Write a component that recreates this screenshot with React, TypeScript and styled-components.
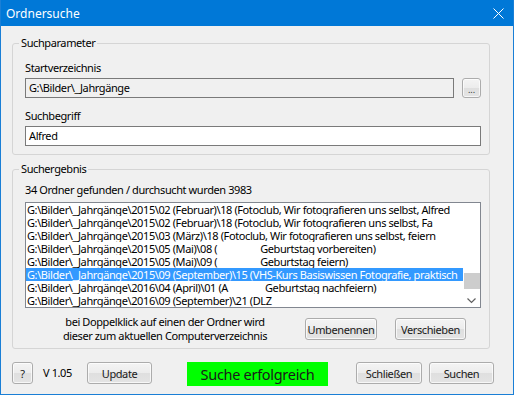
import React from "react";
import styled, { createGlobalStyle } from "styled-components";

const GlobalStyle = createGlobalStyle`
  html, body { margin: 0; padding: 0; background: #ffffff; }
  body { font-family: "Noto Sans", "DejaVu Sans", sans-serif; color: #000; }
  * { box-sizing: border-box; }
`;

const Window = styled.div`
  width: 514px;
  height: 395px;
  border: 1px solid #1a7fd6;
  border-top: none;
  background: #f0f0f0;
  display: flex;
  flex-direction: column;
  font-size: 11px;
  letter-spacing: -0.4px;
`;

const TitleBar = styled.div`
  height: 26px;
  flex: none;
  background: #0078d7;
  color: #ffffff;
  display: flex;
  align-items: center;
  justify-content: space-between;
  padding-left: 5px;
  font-size: 12px;
  letter-spacing: 0;
`;

const CloseBtn = styled.div`
  width: 30px;
  height: 26px;
  display: flex;
  align-items: center;
  justify-content: center;
`;

const Body = styled.div`
  padding: 9px 23px 0 11px;
  display: flex;
  flex-direction: column;
`;

const Group = styled.fieldset<{ $mt?: number }>`
  margin: ${(p) => p.$mt ?? 0}px 0 0 0;
  border: 1px solid #d5d5d5;
  border-radius: 3px;
  padding: ${(p) => (p.$mt ? 5 : 9)}px 8px ${(p) => (p.$mt ? 5 : 8)}px 12px;
  min-width: 0;
  width: 478px;
`;

const Legend = styled.legend`
  line-height: 16px;
  padding: 0 2px;
  margin-left: -6px;
`;

const Label = styled.div`
  line-height: 16px;
`;

const FieldRow = styled.div<{ $mb?: number }>`
  display: flex;
  align-items: center;
  gap: 8px;
  margin-top: 2px;
  margin-bottom: ${(p) => p.$mb ?? 0}px;
`;

const TextBox = styled.div<{ $bg: string }>`
  flex: 1;
  height: 20px;
  border: 1px solid #7a7a7a;
  background: ${(p) => p.$bg};
  padding-left: 3px;
  line-height: 18px;
  white-space: nowrap;
`;

const Button = styled.div<{ $w: number; $h?: number }>`
  width: ${(p) => p.$w}px;
  height: ${(p) => p.$h ?? 22}px;
  flex: none;
  border: 1px solid #acacac;
  border-radius: 3px;
  background: linear-gradient(#f4f4f4 0%, #ececec 50%, #dfdfdf 51%, #e4e4e4 100%);
  box-shadow: inset 0 0 0 1px rgba(255, 255, 255, 0.7);
  display: flex;
  align-items: center;
  justify-content: center;
  color: #1a1a1a;
`;

const Dots = styled.span`
  font-size: 9px;
  line-height: 9px;
  margin-top: 3px;
  letter-spacing: 0;
  color: #333;
`;

const Info = styled.div`
  line-height: 16px;
  margin-bottom: 4px;
`;

const List = styled.div`
  height: 106px;
  border: 1px solid #828790;
  background: #ffffff;
  display: grid;
  grid-template-columns: 1fr 17px;
`;

const Rows = styled.div`
  overflow: hidden;
`;

const Row = styled.div<{ $sel?: boolean }>`
  height: 13px;
  line-height: 13px;
  white-space: nowrap;
  overflow: hidden;
  padding-left: 1px;
  background: ${(p) => (p.$sel ? "#3399ff" : "transparent")};
  color: ${(p) => (p.$sel ? "#ffffff" : "#000000")};
`;

const Gap = styled.span<{ $w: number }>`
  display: inline-block;
  width: ${(p) => p.$w}px;
`;

const ScrollBar = styled.div`
  display: flex;
  flex-direction: column;
  align-items: center;
  background: #ffffff;
`;

const Thumb = styled.div`
  width: 16px;
  height: 16px;
  margin-top: 70px;
  background: #cdcdcd;
`;

const Arrow = styled.div`
  margin-top: auto;
  height: 13px;
  display: flex;
  align-items: center;
`;

const ResultFooter = styled.div`
  display: flex;
  align-items: center;
  margin-top: 7px;
`;

const Hint = styled.div`
  width: 280px;
  text-align: center;
  line-height: 14px;
`;

const Spacer = styled.div<{ $w: number }>`
  width: ${(p) => p.$w}px;
  flex: none;
`;

const BottomBar = styled.div`
  display: flex;
  align-items: flex-start;
  margin-top: 13px;
  padding-left: 11px;
`;

const Version = styled.div`
  line-height: 22px;
  width: 54px;
  padding-left: 10px;
`;

const Status = styled.div`
  width: 141px;
  height: 24px;
  background: #00ff00;
  display: flex;
  align-items: center;
  justify-content: center;
  font-size: 14.5px;
  letter-spacing: -0.3px;
  color: #1a1a1a;
  margin-left: 35px;
  margin-right: 28px;
`;

const rows: { text: React.ReactNode; sel?: boolean }[] = [
  { text: "G:\\Bilder\\_Jahrgänge\\2015\\02 (Februar)\\18 (Fotoclub, Wir fotografieren uns selbst, Alfred" },
  { text: "G:\\Bilder\\_Jahrgänge\\2015\\02 (Februar)\\18 (Fotoclub, Wir fotografieren uns selbst, Fa" },
  { text: "G:\\Bilder\\_Jahrgänge\\2015\\03 (März)\\18 (Fotoclub, Wir fotografieren uns selbst, feiern" },
  { text: <>G:\Bilder\_Jahrgänge\2015\05 (Mai)\08 (<Gap $w={43} />Geburtstag vorbereiten)</> },
  { text: <>G:\Bilder\_Jahrgänge\2015\05 (Mai)\09 (<Gap $w={43} />Geburtstag feiern)</> },
  { text: "G:\\Bilder\\_Jahrgänge\\2015\\09 (September)\\15 (VHS-Kurs Basiswissen Fotografie, praktisch", sel: true },
  { text: <>G:\Bilder\_Jahrgänge\2016\04 (April)\01 (A<Gap $w={37} />Geburtstag nachfeiern)</> },
  { text: "G:\\Bilder\\_Jahrgänge\\2016\\09 (September)\\21 (DLZ" },
];

export default function App() {
  return (
    <>
      <GlobalStyle />
      <Window>
        <TitleBar>
          <span>Ordnersuche</span>
          <CloseBtn>
            <svg width="11" height="11" viewBox="0 0 11 11">
              <path d="M0.5 0.5 L10.5 10.5 M10.5 0.5 L0.5 10.5" stroke="#fff" strokeWidth="1" />
            </svg>
          </CloseBtn>
        </TitleBar>
        <Body>
          <Group>
            <Legend>Suchparameter</Legend>
            <Label>Startverzeichnis</Label>
            <FieldRow $mb={10}>
              <TextBox $bg="#f0f0f0">G:\Bilder\_Jahrgänge</TextBox>
              <Button $w={19} $h={20}>
                <Dots>...</Dots>
              </Button>
            </FieldRow>
            <Label>Suchbegriff</Label>
            <FieldRow>
              <TextBox $bg="#ffffff">Alfred</TextBox>
            </FieldRow>
          </Group>
          <Group $mt={6}>
            <Legend>Suchergebnis</Legend>
            <Info>34 Ordner gefunden / durchsucht wurden 3983</Info>
            <List>
              <Rows>
                {rows.map((r, i) => (
                  <Row key={i} $sel={r.sel}>
                    {r.text}
                  </Row>
                ))}
              </Rows>
              <ScrollBar>
                <Thumb />
                <Arrow>
                  <svg width="9" height="6" viewBox="0 0 9 6">
                    <path d="M0.5 0.5 L4.5 4.5 L8.5 0.5" stroke="#606060" strokeWidth="1.2" fill="none" />
                  </svg>
                </Arrow>
              </ScrollBar>
            </List>
            <ResultFooter>
              <Hint>
                bei Doppelklick auf einen der Ordner wird
                <br />
                dieser zum aktuellen Computerverzeichnis
              </Hint>
              <Button $w={72}>Umbenennen</Button>
              <Spacer $w={18} />
              <Button $w={71}>Verschieben</Button>
            </ResultFooter>
          </Group>
        </Body>
        <BottomBar>
          <Button $w={21}>?</Button>
          <Version>V 1.05</Version>
          <Button $w={65}>Update</Button>
          <Status>Suche erfolgreich</Status>
          <Button $w={66}>Schließen</Button>
          <Spacer $w={7} />
          <Button $w={65}>Suchen</Button>
        </BottomBar>
      </Window>
    </>
  );
}
